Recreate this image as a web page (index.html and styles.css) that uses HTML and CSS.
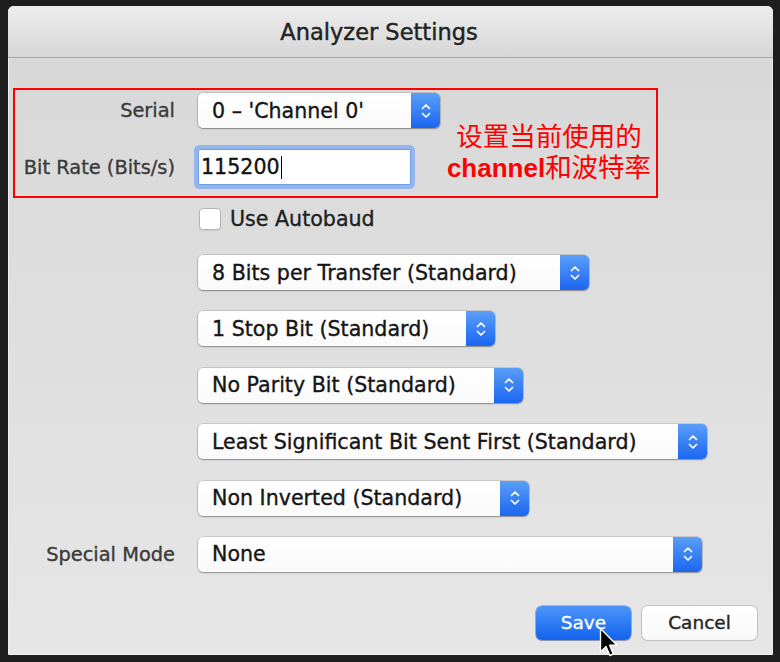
FILE: index.html
```html
<!DOCTYPE html>
<html lang="en">
<head>
<meta charset="utf-8">
<title>Analyzer Settings</title>
<link rel="stylesheet" href="styles.css">
</head>
<body>
<div class="dialog">
  <div class="titlebar"><span class="title">Analyzer Settings</span></div>
  <div class="content">
    <div class="annot">
      <div class="annot-form">
        <label class="lbl">Serial</label>
        <div class="select w-serial">
          <span class="val">0 – 'Channel 0'</span>
          <span class="arrows"><svg viewBox="0 0 12 22" width="12" height="22"><path d="M2.5 8.5 L6 5 L9.5 8.5 M2.5 13.5 L6 17 L9.5 13.5" fill="none" stroke="#fff" stroke-width="1.7" stroke-linecap="round" stroke-linejoin="round"/></svg></span>
        </div>
        <label class="lbl">Bit Rate (Bits/s)</label>
        <div class="input">115200<span class="caret"></span></div>
      </div>
      <div class="note"><span class="l1">设置当前使用的</span><span class="l2"><b>channel</b>和波特率</span></div>
    </div>

    <div class="row row-check">
      <span></span>
      <div class="check"><span class="box"></span><span class="check-lbl">Use Autobaud</span></div>
    </div>

    <div class="row row-first">
      <span></span>
      <div class="select w-bits">
        <span class="val">8 Bits per Transfer (Standard)</span>
        <span class="arrows"><svg viewBox="0 0 12 22" width="12" height="22"><path d="M2.5 8.5 L6 5 L9.5 8.5 M2.5 13.5 L6 17 L9.5 13.5" fill="none" stroke="#fff" stroke-width="1.7" stroke-linecap="round" stroke-linejoin="round"/></svg></span>
      </div>
    </div>

    <div class="row">
      <span></span>
      <div class="select w-stop">
        <span class="val">1 Stop Bit (Standard)</span>
        <span class="arrows"><svg viewBox="0 0 12 22" width="12" height="22"><path d="M2.5 8.5 L6 5 L9.5 8.5 M2.5 13.5 L6 17 L9.5 13.5" fill="none" stroke="#fff" stroke-width="1.7" stroke-linecap="round" stroke-linejoin="round"/></svg></span>
      </div>
    </div>

    <div class="row">
      <span></span>
      <div class="select w-parity">
        <span class="val">No Parity Bit (Standard)</span>
        <span class="arrows"><svg viewBox="0 0 12 22" width="12" height="22"><path d="M2.5 8.5 L6 5 L9.5 8.5 M2.5 13.5 L6 17 L9.5 13.5" fill="none" stroke="#fff" stroke-width="1.7" stroke-linecap="round" stroke-linejoin="round"/></svg></span>
      </div>
    </div>

    <div class="row">
      <span></span>
      <div class="select w-lsb">
        <span class="val">Least Significant Bit Sent First (Standard)</span>
        <span class="arrows"><svg viewBox="0 0 12 22" width="12" height="22"><path d="M2.5 8.5 L6 5 L9.5 8.5 M2.5 13.5 L6 17 L9.5 13.5" fill="none" stroke="#fff" stroke-width="1.7" stroke-linecap="round" stroke-linejoin="round"/></svg></span>
      </div>
    </div>

    <div class="row">
      <span></span>
      <div class="select w-inv">
        <span class="val">Non Inverted (Standard)</span>
        <span class="arrows"><svg viewBox="0 0 12 22" width="12" height="22"><path d="M2.5 8.5 L6 5 L9.5 8.5 M2.5 13.5 L6 17 L9.5 13.5" fill="none" stroke="#fff" stroke-width="1.7" stroke-linecap="round" stroke-linejoin="round"/></svg></span>
      </div>
    </div>

    <div class="row">
      <label class="lbl">Special Mode</label>
      <div class="select w-special">
        <span class="val">None</span>
        <span class="arrows"><svg viewBox="0 0 12 22" width="12" height="22"><path d="M2.5 8.5 L6 5 L9.5 8.5 M2.5 13.5 L6 17 L9.5 13.5" fill="none" stroke="#fff" stroke-width="1.7" stroke-linecap="round" stroke-linejoin="round"/></svg></span>
      </div>
    </div>

    <div class="buttons">
      <button class="btn btn-primary">Save</button>
      <button class="btn btn-default">Cancel</button>
    </div>
  </div>
</div>
<svg class="cursor" viewBox="0 0 20 32" width="20" height="32"><path d="M1.5 1.5 L1.5 25 L7 19.5 L10.8 28.5 L14.3 27 L10.6 18.3 L18 18.3 Z" fill="#000" stroke="#fff" stroke-width="1.4" stroke-linejoin="round"/></svg>
</body>
</html>
```

FILE: styles.css
```css
html, body {
  margin: 0;
  padding: 0;
}
body {
  background: #1e1e1e;
  width: 780px;
  height: 662px;
  overflow: hidden;
  position: relative;
  font-family: "DejaVu Sans", "Liberation Sans", sans-serif;
}
.dialog {
  margin: 6px 0 0 8px;
  width: 765px;
  height: 649px;
  border-radius: 6px 6px 2px 2px;
  background: linear-gradient(#d7d7d7, #e6e6e6);
  box-shadow: inset 1px 0 0 #eeeeee, inset -1px 0 0 #eeeeee, inset 0 -1px 0 #f0f0f0;
  overflow: hidden;
  display: flex;
  flex-direction: column;
}
.titlebar {
  height: 51px;
  border-bottom: 1px solid #a9a9a9;
  background: linear-gradient(#ededed, #d6d6d6);
  display: flex;
  align-items: center;
  justify-content: center;
  padding-right: 23px;
  flex: none;
}
.title {
  font-size: 22.5px;
  color: #222;
  -webkit-text-stroke: 0.45px #222;
  text-shadow: 0 1px 0 rgba(255,255,255,0.5);
}
.content {
  padding-left: 5px;
  display: flex;
  flex-direction: column;
}
.annot {
  margin-top: 30px;
  width: 641px;
  height: 106px;
  border: 2px solid #ff0000;
  display: flex;
}
.annot-form {
  display: grid;
  grid-template-columns: 160px 242px;
  column-gap: 23px;
  row-gap: 21px;
  align-items: center;
  padding-top: 3px;
  align-self: flex-start;
}
.note {
  flex: 1;
  margin-top: 29px;
  align-self: flex-start;
  display: flex;
  flex-direction: column;
  align-items: center;
  color: #ff0000;
  font-family: "Noto Sans CJK SC", sans-serif;
  font-size: 26.5px;
  padding-left: 2px;
}
.note .l1, .note .l2 {
  display: block;
  height: 31px;
  line-height: 31px;
  white-space: nowrap;
}
.note b {
  font-family: "Liberation Sans", sans-serif;
  font-weight: bold;
  font-size: 26px;
}
.lbl {
  text-align: right;
  font-size: 19.4px;
  color: #3a3a3a;
  -webkit-text-stroke: 0.35px #3a3a3a;
  white-space: nowrap;
}
.select {
  height: 35px;
  display: flex;
  align-items: stretch;
  background: linear-gradient(#ffffff, #fafafa);
  border-radius: 5px;
  box-shadow: 0 0 0 0.6px rgba(0,0,0,0.22), 0 1px 1.5px rgba(0,0,0,0.3);
  box-sizing: border-box;
}
.select .val {
  flex: 1;
  padding-left: 14px;
  font-size: 20.6px;
  color: #151515;
  -webkit-text-stroke: 0.35px #151515;
  display: flex;
  align-items: center;
  white-space: nowrap;
}
.select .arrows {
  width: 29px;
  flex: none;
  border-radius: 0 5px 5px 0;
  background: linear-gradient(#5b9ef9, #1b66f0);
  display: flex;
  align-items: center;
  justify-content: center;
}
.w-serial { width: 242px; }
.w-bits { width: 391px; }
.w-stop { width: 297px; }
.w-parity { width: 325px; }
.w-lsb { width: 509px; }
.w-inv { width: 331px; }
.w-special { width: 504px; }

.input {
  width: 213px;
  height: 36px;
  box-sizing: border-box;
  background: #fff;
  border: 1px solid #6f9ce6;
  border-radius: 2px;
  box-shadow: 0 0 0 4px #94b6ef;
  padding-left: 2px;
  font-size: 20.6px;
  color: #111;
  -webkit-text-stroke: 0.35px #111;
  display: flex;
  align-items: center;
}
.caret {
  display: inline-block;
  width: 1px;
  height: 23px;
  background: #000;
  margin-left: 1px;
}
.row {
  display: grid;
  grid-template-columns: 162px auto;
  column-gap: 23px;
  align-items: center;
  justify-content: start;
  margin-top: 21.4px;
}
.row-check {
  margin-top: 10px;
}
.row-first {
  margin-top: 25px;
}
.check {
  display: flex;
  align-items: center;
  height: 22px;
  margin-left: 1px;
}
.box {
  width: 20px;
  height: 20px;
  background: #fff;
  border: 1px solid #b4b4b4;
  border-radius: 4px;
  box-shadow: 0 1px 1px rgba(0,0,0,0.08);
}
.check-lbl {
  margin-left: 9px;
  font-size: 20.6px;
  color: #1e1e1e;
  -webkit-text-stroke: 0.35px #1e1e1e;
}
.buttons {
  display: flex;
  justify-content: flex-end;
  gap: 11px;
  margin-top: 34px;
  padding-right: 16px;
}
.btn {
  height: 34px;
  border: none;
  border-radius: 6px;
  font-family: "DejaVu Sans", sans-serif;
  font-size: 18.5px;
  padding: 0;
  margin: 0;
}
.btn-primary {
  width: 95px;
  color: #fff;
  -webkit-text-stroke: 0.3px #fff;
  background: linear-gradient(#4d95fa, #1263ef);
  box-shadow: 0 0 0 0.6px rgba(0,40,150,0.5), 0 1px 1px rgba(0,0,0,0.2);
}
.btn-default {
  width: 115px;
  color: #262626;
  -webkit-text-stroke: 0.4px #262626;
  background: linear-gradient(#ffffff, #f8f8f8);
  box-shadow: 0 0 0 1px #c2c2c2, 0 1px 1px rgba(0,0,0,0.15);
}
.cursor {
  position: absolute;
  left: 599px;
  top: 627px;
  width: 20px;
  height: 32px;
}
```
